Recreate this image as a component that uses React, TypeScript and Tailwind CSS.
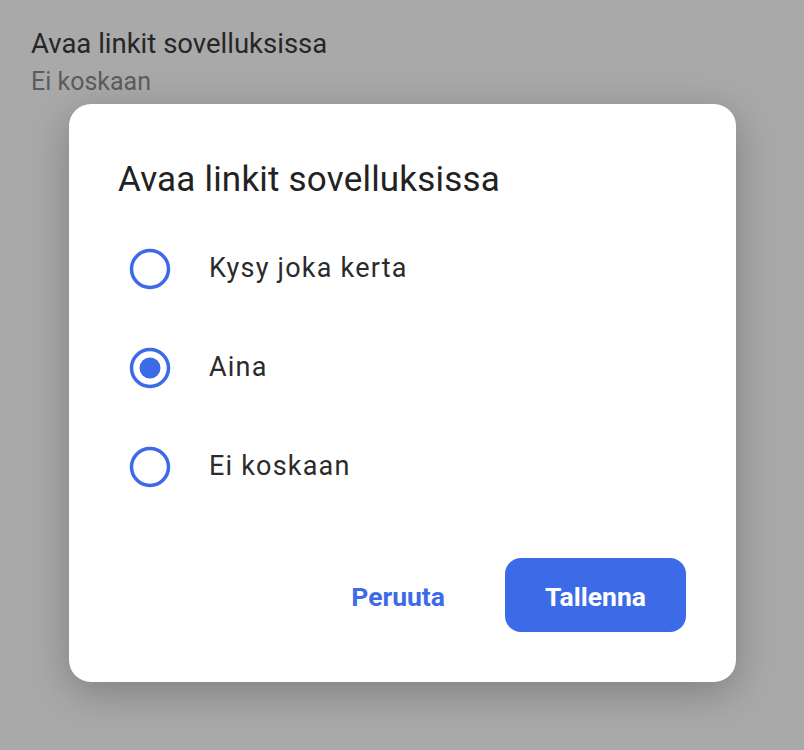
import React, { useState } from 'react';

const options = ['Kysy joka kerta', 'Aina', 'Ei koskaan'];

const Radio: React.FC<{ checked: boolean }> = ({ checked }) => (
  <svg width="42" height="42" viewBox="0 0 42 42" className="shrink-0">
    <circle cx="21" cy="21" r="18.5" fill="none" stroke="#3d6be8" strokeWidth="3.5" />
    {checked && <circle cx="21" cy="21" r="10.5" fill="#3d6be8" />}
  </svg>
);

const App: React.FC = () => {
  const [selected, setSelected] = useState(1);

  return (
    <div
      className="w-[804px] h-[750px] bg-[#a9a9a9] overflow-hidden"
      style={{ fontFamily: 'Roboto, "Noto Sans", sans-serif' }}
    >
      {/* Setting row behind the scrim */}
      <div className="pl-[31px] pt-[26px]">
        <div className="text-[27.5px] leading-[36px] text-[#262626]">Avaa linkit sovelluksissa</div>
        <div className="text-[25px] leading-[40px] text-[#5b5b5b]">Ei koskaan</div>
      </div>

      {/* Dialog */}
      <div className="ml-[69px] mt-[2px] w-[667px] h-[578px] bg-white rounded-[22px] shadow-[0_10px_40px_rgba(0,0,0,0.25)] flex flex-col">
        <h2 className="pl-[49px] pt-[54px] text-[35px] leading-[44px] text-[#222222] tracking-[0.2px]">
          Avaa linkit sovelluksissa
        </h2>

        <div className="mt-[17px] flex flex-col">
          {options.map((opt, i) => (
            <button
              key={opt}
              onClick={() => setSelected(i)}
              className="flex items-center h-[99px] pl-[60px] text-left"
            >
              <Radio checked={selected === i} />
              <span className="ml-[38px] text-[27px] text-[#2b2b2b] tracking-[1.2px]">{opt}</span>
            </button>
          ))}
        </div>

        <div className="mt-auto mb-[50px] mr-[50px] flex items-center justify-end">
          <button className="text-[26.5px] font-bold text-[#3d6be8] mr-[60px] pt-[4px]">Peruuta</button>
          <button className="w-[181px] h-[74px] rounded-[16px] bg-[#3d6be8] text-white text-[26.5px] font-bold pt-[4px]">
            Tallenna
          </button>
        </div>
      </div>
    </div>
  );
};

export default App;
